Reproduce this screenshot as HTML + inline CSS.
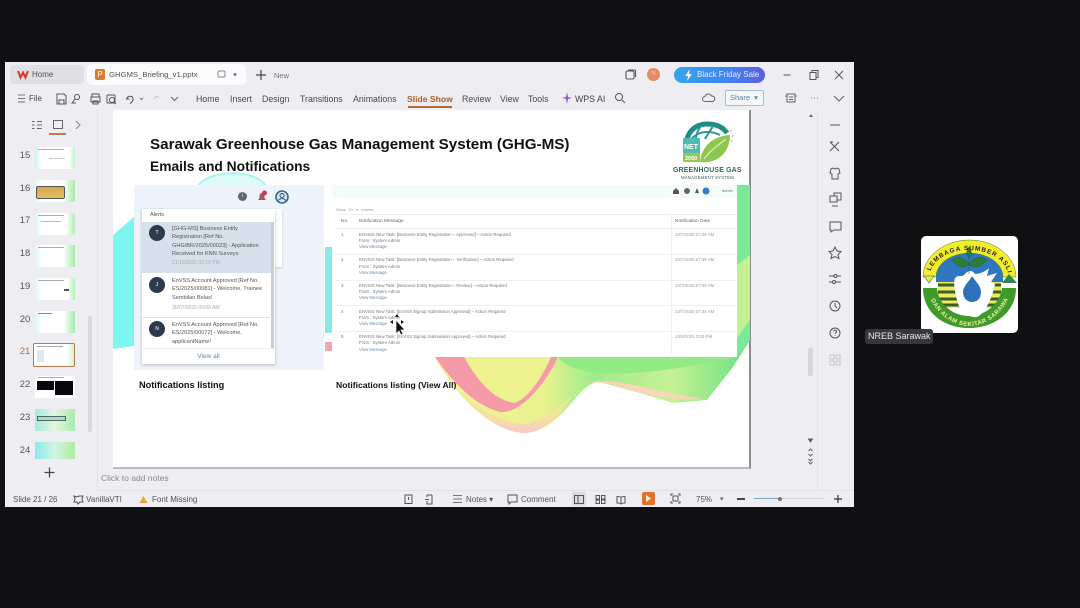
<!DOCTYPE html>
<html><head><meta charset="utf-8"><style>
*{box-sizing:border-box;margin:0;padding:0}
html,body{width:1080px;height:608px;overflow:hidden;background:#101012;font-family:"Liberation Sans",sans-serif;color:#444}
#r{position:absolute;left:0;top:0;width:1080px;height:608px;filter:blur(.35px);overflow:hidden}
.a{position:absolute;white-space:nowrap}
.t{font-size:8.800px;color:#4a4a4a;top:94px}
.s{font-size:8px;color:#555}
.n{font-size:9.500px;color:#555;left:19px;width:12px;text-align:center}
.th{position:absolute;left:35px;width:40px;height:22px;background:#fff;overflow:hidden}
.m{font-size:4.300px;color:#777}
.v{font-size:4.300px;color:#6d8aa5}
.al{font-size:5.600px;line-height:8.400px;color:#555;left:172px;white-space:nowrap}
.dt{font-size:5px;color:#aaa;left:172px}
.av{position:absolute;left:149px;width:16px;height:16px;border-radius:50%;background:#2c3a4d;color:#ccd;font-size:5px;font-weight:bold;text-align:center;line-height:16px}
.d{font-size:4.400px;color:#999;left:675px}
.no{font-size:4.400px;color:#777;left:341px}
svg{position:absolute;overflow:visible}
</style></head><body><div id="r">
<div class="a" style="left:5px;top:62px;width:849px;height:445px;background:#eeeef2"></div>

<div class="a" style="left:10px;top:65px;width:74px;height:19px;background:#dfdfe4;border-radius:4px"></div>
<svg style="left:17px;top:70px" width="12" height="9" fill="none" stroke="#d8382f" stroke-width="2"><path d="M1 1l2.500 6.500L6 2.500 8.500 7.500 11 1"/></svg>
<div class="a s" style="left:32px;top:70px">Home</div>
<div class="a" style="left:87px;top:64px;width:159px;height:21px;background:#fbfbfd;border-radius:5px"></div>
<div class="a" style="left:95px;top:69px;width:10px;height:11px;background:#e07a2b;border-radius:2px;color:#fff;font-size:8px;line-height:11px;text-align:center">P</div>
<div class="a" style="left:109px;top:70px;font-size:7.700px;color:#555">GHGMS_Briefing_v1.pptx</div>
<svg style="left:217px;top:70px" width="24" height="10" fill="none" stroke="#888"><rect x="1" y="1" width="7" height="6" rx="1.500"/><circle cx="18" cy="4.500" r="1.500" fill="#777" stroke="none"/></svg>
<svg style="left:256px;top:70px" width="10" height="10" stroke="#444" stroke-width="1.200"><path d="M5 0v10M0 5h10"/></svg>
<div class="a" style="left:274px;top:71px;font-size:7.500px;color:#777">New</div>

<svg style="left:625px;top:69px" width="11" height="11" fill="none" stroke="#555" stroke-width="1.100"><rect x="1" y="2" width="8" height="8" rx="1.500"/><path d="M3 1h6.500q1 0 1 1v6"/></svg>
<div class="a" style="left:647px;top:68px;width:13px;height:13px;background:#e58b60;border-radius:50%;color:#fbe;font-size:6px;line-height:13px;text-align:center">N</div>
<div class="a" style="left:674px;top:67px;width:91px;height:16px;border-radius:8px;background:linear-gradient(90deg,#34a5ee,#3d87f0 55%,#5b5fe0);color:#e8f0ff;font-size:8px;line-height:16px;padding-left:23px">Black Friday Sale</div>
<svg style="left:684px;top:69px" width="10" height="12" fill="#f2f6ff"><path d="M6 0L1 7h3l-1 5 5-7H5z"/></svg>
<svg style="left:783px;top:69px" width="62" height="12" fill="none" stroke="#555"><path d="M0.500 6h7"/><rect x="27" y="3.500" width="6" height="7"/><path d="M29 3.500v-2h6v7h-2"/><path d="M52 2l8 8M60 2l-8 8"/></svg>

<svg style="left:18px;top:94px" width="8" height="9" stroke="#777"><path d="M0 1h7M0 4.500h7M0 8h7"/></svg>
<div class="a s" style="left:29px;top:94px;color:#444">File</div>
<svg style="left:50px;top:92px" width="135" height="13" fill="none" stroke="#555" stroke-width="1"><path d="M7 2h7l2 2v8H7z"/><path d="M9 12V8h5v4"/><circle cx="27" cy="5" r="2.500"/><path d="M25 7l-3 4h4"/><path d="M42 5V2h7v3M41 5h9v5h-9zM43 9h5v3h-5z"/><rect x="57" y="3" width="8" height="8" rx="1"/><circle cx="62" cy="8" r="2.500"/><path d="M64 10l2 2"/><path d="M78 4.500l-1.500 2.500h3M77 6.500c1-3 5-3 6 0 .5 2-1 4-3 5"/><path d="M90 6l1.500 1.500L93 6" stroke="#777"/><path d="M104 7c1-3 4-3 5-1" stroke="#c4c4c8"/><path d="M121 5l3.500 3.500L128 5" stroke="#666"/></svg>

<div class="a t" style="left:196px">Home</div><div class="a t" style="left:230px">Insert</div><div class="a t" style="left:262px">Design</div><div class="a t" style="left:300px">Transitions</div><div class="a t" style="left:353px">Animations</div>
<div class="a t" style="left:407px;color:#a65f2c;font-weight:bold;font-size:8.600px">Slide Show</div>
<div class="a" style="left:408px;top:106px;width:44px;height:1.500px;background:#b36a33"></div>
<div class="a t" style="left:462px">Review</div><div class="a t" style="left:500px">View</div><div class="a t" style="left:528px">Tools</div>
<svg style="left:562px;top:92px" width="10" height="12" fill="#8a5bd8"><path d="M5 0l1 5 4 1-4 1-1 5-1-5-4-1 4-1z"/></svg>
<div class="a t" style="left:575px;color:#444">WPS AI</div>
<svg style="left:614px;top:92px" width="12" height="12" fill="none" stroke="#555"><circle cx="5" cy="5" r="3.500"/><path d="M8 8l3 3"/></svg>
<svg style="left:702px;top:92px" width="13" height="12" fill="none" stroke="#666"><path d="M3 9.500a2.500 2.500 0 0 1 0-5 3.500 3.500 0 0 1 6.500-.5 2.500 2.500 0 0 1 1 5.500z"/></svg>
<div class="a" style="left:725px;top:90px;width:39px;height:16px;border:1px solid #a6bfcf;border-radius:2px;font-size:7.500px;line-height:14px;padding-left:4px;color:#5a87a8;background:#f4f6f9">Share&nbsp; ▾</div>
<svg style="left:785px;top:92px" width="62" height="12" fill="none" stroke="#666"><path d="M2 2h8v8H2zM0 4h2M10 4h2M4 5h4M4 7.500h4"/><path d="M26 6h.8M29 6h.8M32 6h.8"/><path d="M49 4l5 5 5-5"/></svg>

<div class="a" style="left:97px;top:110px;width:1px;height:380px;background:#e2e2e6"></div>
<div class="a" style="left:817px;top:110px;width:1px;height:380px;background:#e2e2e6"></div>

<svg style="left:31px;top:120px" width="60" height="15" fill="none" stroke="#666"><path d="M1 1.500h2.500M6 1.500h5M1 5h2.500M6 5h5M1 8.500h2.500M6 8.500h5"/><rect x="22.500" y=".5" width="9" height="8"/><path d="M45 1l4 4-4 4" stroke="#888"/></svg>
<div class="a" style="left:49px;top:133px;width:17px;height:1.500px;background:#c77a45"></div>

<div class="a n" style="top:150px">15</div><div class="a n" style="top:183px">16</div><div class="a n" style="top:215px">17</div><div class="a n" style="top:248px">18</div><div class="a n" style="top:281px">19</div><div class="a n" style="top:314px">20</div><div class="a n" style="top:346px;color:#b5723f">21</div><div class="a n" style="top:379px">22</div><div class="a n" style="top:412px">23</div><div class="a n" style="top:445px">24</div>

<div class="th" style="top:147px;background:linear-gradient(90deg,#c9f2f2,#fff 16% 86%,#c4efca)"><div style="position:absolute;left:3px;top:2px;width:26px;height:1px;background:#aaa"></div><div style="position:absolute;left:14px;top:11px;width:16px;height:1px;background:#ccc"></div></div>
<div class="th" style="top:180px;background:linear-gradient(90deg,#e8f6ee,#fff 20% 70%,#a8e8a8)"><div style="position:absolute;left:1px;top:6px;width:29px;height:13px;background:linear-gradient(#d3a94c,#e3bd69);border:1px solid #555;border-radius:2px"></div></div>
<div class="th" style="top:213px;background:linear-gradient(90deg,#d6f5f2,#fff 16% 78%,#b4edb6)"><div style="position:absolute;left:3px;top:2px;width:26px;height:1px;background:#aaa"></div><div style="position:absolute;left:6px;top:8px;width:20px;height:1px;background:#bbb"></div></div>
<div class="th" style="top:245px;background:linear-gradient(90deg,#d9f6f3,#fff 16% 70%,#a5e9aa)"><div style="position:absolute;left:3px;top:2px;width:26px;height:1px;background:#aaa"></div></div>
<div class="th" style="top:278px;background:linear-gradient(90deg,#d9f6f3,#fff 16% 82%,#b4edb6)"><div style="position:absolute;left:3px;top:2px;width:26px;height:1px;background:#aaa"></div><div style="position:absolute;left:29px;top:11px;width:5px;height:2px;background:#456"></div></div>
<div class="th" style="top:311px;background:linear-gradient(90deg,#d9f6f3,#fff 16% 72%,#a5e9aa)"><div style="position:absolute;left:3px;top:2px;width:14px;height:1px;background:#888"></div></div>
<div class="a" style="left:33px;top:343px;width:42px;height:24px;border:1.500px solid #b5794a;border-radius:2px;background:linear-gradient(90deg,#fff 80%,#d5f2d6)"><div style="position:absolute;left:3px;top:2px;width:26px;height:1px;background:#aaa"></div><div style="position:absolute;left:3px;top:6px;width:7px;height:12px;background:#dfe7f2"></div></div>
<div class="th" style="top:376px"><div style="position:absolute;left:2px;top:5px;width:17px;height:9px;background:#08080c"></div><div style="position:absolute;left:20px;top:5px;width:18px;height:14px;background:#08080c"></div><div style="position:absolute;left:3px;top:1px;width:26px;height:1px;background:#aaa"></div></div>
<div class="th" style="top:409px;background:linear-gradient(90deg,#a8e8e2,#e4f7de 50%,#a8eaac)"><div style="position:absolute;left:2px;top:7px;width:29px;height:5px;background:#b5d8c4;border:1px solid #4a6a66"></div></div>
<div class="th" style="top:442px;height:17px;background:linear-gradient(90deg,#8aeaee,#d0f4e2 50%,#aeeb9e)"></div>
<svg style="left:44px;top:467px" width="11" height="11" stroke="#444" stroke-width="1.200"><path d="M5.500 0.500v10M.5 5.500h10"/></svg>
<div class="a" style="left:88px;top:316px;width:4px;height:116px;background:#d8d8dc;border-radius:2px"></div>

<!-- slide -->
<div class="a" style="left:113px;top:110px;width:638px;height:359px;background:#fff;border-right:2px solid #8e8e90;border-bottom:2px solid #bbb;overflow:hidden"></div>
<svg style="left:113px;top:110px" width="637" height="358" viewBox="113 110 637 358">
<defs>
<linearGradient id="g" x1="0" y1="0" x2="1" y2="0"><stop offset="0" stop-color="#f6ef9a"/><stop offset=".35" stop-color="#e8f28e"/><stop offset=".5" stop-color="#9eec8c"/><stop offset=".75" stop-color="#c8f095"/><stop offset="1" stop-color="#66e282"/></linearGradient>
<linearGradient id="e" x1="0" y1="0" x2="0" y2="1"><stop offset="0" stop-color="#f0ee94"/><stop offset=".7" stop-color="#f8e0a0"/><stop offset="1" stop-color="#f9c8c8"/></linearGradient>
</defs>
<path d="M113 235L134 217V346L113 349Z" fill="#7df6f0"/>
<path d="M198 186C208 170 255 168 266 186Z" fill="#dcfbf8" stroke="#a9f5ee" stroke-width="2"/>
<rect x="325" y="247" width="7" height="86" fill="#86ebe6"/><rect x="325" y="342" width="7" height="9" fill="#f2a6ae"/>
<path d="M725 185H750V340L733 367 707 400 673 403 640 393 600 382C578 380 565 430 525 433 500 433 470 410 448 378 442 370 438 364 435 357H725Z" fill="url(#g)"/>
<path d="M448 378C470 410 500 433 525 433 545 433 560 412 572 396 555 410 540 422 525 424 500 424 470 405 448 378Z" fill="url(#e)"/>
<path d="M585 383C620 375 660 395 706 399 670 402 640 393 610 384 600 382 592 382 585 383Z" fill="#f8d6b8"/>
<path d="M464 357C480 385 495 400 515 403 528 398 542 378 551 357H464Z" fill="#eef28e"/>
<path d="M435 357C455 385 475 405 500 412 520 414 545 385 558 357H551C542 378 528 398 515 403 495 400 480 385 464 357Z" fill="#f59aa8"/>
<path d="M558 357C575 380 640 378 737 357Z" fill="#92ea84"/>
<path d="M725 185H750V340L737 357H725Z" fill="#79ea98"/>
<path d="M737 265L750 255V320L737 338Z" fill="#c3f091"/>
</svg>

<div class="a" style="left:150px;top:136px;font-size:15.200px;font-weight:bold;color:#111">Sarawak Greenhouse Gas Management System (GHG-MS)</div>
<div class="a" style="left:150px;top:159px;font-size:13.800px;font-weight:bold;color:#111">Emails and Notifications</div>

<!-- logo -->
<svg style="left:682px;top:122px" width="56" height="42" viewBox="0 0 56 42">
<path d="M5 17C8 6 17 2 25 2c9 0 16 3 20 9" fill="none" stroke="#1f8c86" stroke-width="5"/>
<path d="M8 19C14 10 26 7 38 13M19 4c-4 5-5 9-5 15M31 4c-2 4-6 9-8 13" fill="none" stroke="#2d9a90" stroke-width="2"/>
<path d="M18 40C20 22 33 14 48 13 48 30 36 42 18 40Z" fill="#8cc850"/>
<path d="M22 37C28 29 36 23 44 17" fill="none" stroke="#dcefb4" stroke-width="1.200"/>
<path d="M48 9h1.500M50 14h1.500M49 19h1.500M44 7h1.500" stroke="#c8b860" stroke-width="1.500"/>
<rect x="1" y="16" width="17" height="24" fill="#4dbcb4"/><rect x="1" y="31" width="17" height="9" fill="#9ac84e"/>
<text x="2" y="27" font-size="7" fill="#fff" font-family="Liberation Sans" font-weight="bold">NET</text>
<text x="3" y="38" font-size="5.500" fill="#fff" font-family="Liberation Sans" font-weight="bold">2050</text>
</svg>
<div class="a" style="left:673px;top:167px;font-size:6.900px;font-weight:bold;color:#2d6a64;letter-spacing:.2px">GREENHOUSE GAS</div>
<div class="a" style="left:681px;top:175px;font-size:4.300px;color:#3a5a55;letter-spacing:.2px">MANAGEMENT SYSTEM</div>

<!-- left panel -->
<div class="a" style="left:134px;top:185px;width:190px;height:185px;background:#eef3fb"></div>
<div class="a" style="left:275px;top:209px;width:7px;height:58px;background:#fff;box-shadow:0 1px 2px #ccc"></div>
<div class="a" style="left:238px;top:192px;width:9px;height:9px;border-radius:50%;background:#5f6670;color:#ddd;font-size:6px;line-height:9px;text-align:center">i</div>
<svg style="left:257px;top:190px" width="12" height="13"><path d="M5 3C2.500 3 2.500 6 2.500 8L1 10h8L7.500 8C7.500 6 7.500 3 5 3Z" fill="#a85466"/><circle cx="7.500" cy="3" r="2.500" fill="#d03a50"/></svg>
<svg style="left:275px;top:190px" width="14" height="14" fill="none"><circle cx="7" cy="7" r="6" stroke="#2b6a94" stroke-width="1.600" fill="#dde7f2"/><circle cx="7" cy="5.500" r="2" stroke="#2b5a7c"/><path d="M3.500 10.500c1-2.500 6-2.500 7 0" stroke="#2b5a7c"/></svg>
<div class="a" style="left:142px;top:209px;width:133px;height:155px;background:#fff;box-shadow:0 1px 3px rgba(0,0,0,.25)"></div>
<div class="a" style="left:150px;top:212px;font-size:5.500px;color:#555">Alerts</div>
<div class="a" style="left:142px;top:222px;width:130px;height:51px;background:#d6e1ec"></div>
<div class="a" style="left:271px;top:222px;width:3px;height:126px;background:#c9ced6"></div>
<div class="av" style="top:225px">T</div>
<div class="a al" style="top:225px">[GHG-MS] Business Entity<br>Registration [Ref No.<br>GHG/BR/2025/00023] - Application<br>Received for KNN Surveys</div>
<div class="a dt" style="top:260px">21/10/2025 02:19 PM</div>
<div class="a" style="left:142px;top:317px;width:130px;height:1px;background:#e2e2e2"></div>
<div class="av" style="top:277px">J</div>
<div class="a al" style="top:277px">EnVSS Account Approved [Ref No.<br>ES/2025/00081] - Welcome, Trainee<br>Sembilan Belas!</div>
<div class="a dt" style="top:305px">30/07/2025 09:09 AM</div>
<div class="av" style="top:321px">N</div>
<div class="a al" style="top:321px">EnVSS Account Approved [Ref No.<br>ES/2025/00072] - Welcome,<br>applicantName!</div>
<div class="a" style="left:142px;top:348px;width:133px;height:16px;background:#fff;border-top:1px solid #eee;font-size:6.500px;text-align:center;line-height:15px;color:#5b83a6">View all</div>

<!-- right panel -->
<div class="a" style="left:332px;top:185px;width:405px;height:172px;background:#fff"></div>
<div class="a" style="left:332px;top:185px;width:405px;height:13px;background:#f4fbf9"></div>
<svg style="left:672px;top:187px" width="37" height="8"><path d="M1 4l3-3 3 3v3H1z" fill="#555"/><circle cx="15" cy="4" r="3" fill="#666"/><path d="M25 1l2 5h-4z" fill="#555"/><circle cx="34" cy="4" r="3.500" fill="#2c7fc0"/></svg>
<div class="a" style="left:722px;top:188px;font-size:4px;color:#777">admin</div>
<div class="a" style="left:336px;top:207px;font-size:4px;color:#999">Show&nbsp; 10 &nbsp; ▾ &nbsp; entries</div>
<div class="a" style="left:336px;top:214px;width:400px;height:1px;background:#eee"></div>
<div class="a" style="left:336px;top:228px;width:400px;height:1px;background:#eee"></div>
<div class="a" style="left:671px;top:214px;width:1px;height:140px;background:#eee"></div>
<div class="a" style="left:341px;top:219px;font-size:4.800px;color:#666">No.</div>
<div class="a" style="left:359px;top:219px;font-size:4.800px;color:#666">Notification Message</div>
<div class="a" style="left:675px;top:219px;font-size:4.800px;color:#666">Notification Date</div>

<div class="a no" style="top:232px">1</div><div class="a m" style="left:359px;top:232px">ENVISS New Task: [Business Entity Registration – Approved] – Action Required</div><div class="a m" style="left:359px;top:238px">From : System Admin</div><div class="a v" style="left:359px;top:244px">View Message</div><div class="a d" style="top:232px">10/7/2025 07:49 AM</div>
<div class="a" style="left:336px;top:254px;width:400px;height:1px;background:#f0f0f0"></div>
<div class="a no" style="top:257px">2</div><div class="a m" style="left:359px;top:257px">ENVISS New Task: [Business Entity Registration – Verification] – Action Required</div><div class="a m" style="left:359px;top:264px">From : System Admin</div><div class="a v" style="left:359px;top:270px">View Message</div><div class="a d" style="top:257px">10/7/2025 07:49 AM</div>
<div class="a" style="left:336px;top:280px;width:400px;height:1px;background:#f0f0f0"></div>
<div class="a no" style="top:283px">3</div><div class="a m" style="left:359px;top:283px">ENVISS New Task: [Business Entity Registration – Review] – Action Required</div><div class="a m" style="left:359px;top:289px">From : System Admin</div><div class="a v" style="left:359px;top:295px">View Message</div><div class="a d" style="top:283px">10/7/2025 07:49 AM</div>
<div class="a" style="left:336px;top:305px;width:400px;height:1px;background:#f0f0f0"></div>
<div class="a no" style="top:309px">4</div><div class="a m" style="left:359px;top:309px">ENVISS New Task: [EnVSS Signup Submission Approved] – Action Required</div><div class="a m" style="left:359px;top:315px">From : System Admin</div><div class="a v" style="left:359px;top:321px">View Message</div><div class="a d" style="top:309px">10/7/2025 07:34 AM</div>
<div class="a" style="left:336px;top:331px;width:400px;height:1px;background:#f0f0f0"></div>
<div class="a no" style="top:334px">5</div><div class="a m" style="left:359px;top:334px">ENVISS New Task: [EnVSS Signup Submission Approved] – Action Required</div><div class="a m" style="left:359px;top:340px">From : System Admin</div><div class="a v" style="left:359px;top:347px">View Message</div><div class="a d" style="top:334px">10/5/2025 3:00 PM</div>

<div class="a" style="left:139px;top:380px;font-size:9.200px;font-weight:bold;color:#111">Notifications listing</div>
<div class="a" style="left:336px;top:380px;font-size:8.600px;font-weight:bold;color:#111">Notifications listing (View All)</div>

<!-- cursor -->
<svg style="left:390px;top:314px" width="18" height="22"><path d="M7 0L5 3h4zM0 8l3-2v4zM14 8l-3-2v4z" fill="#111"/><path d="M6 6v14l3-3 2 4 2-1-2-4h4z" fill="#111" stroke="#fff" stroke-width=".7"/></svg>

<!-- notes / side scroll -->
<div class="a" style="left:101px;top:473px;font-size:8.500px;color:#8a8a8a">Click to add notes</div>
<div class="a" style="left:97px;top:490px;width:757px;height:1px;background:#e3e3e7"></div>
<div class="a" style="left:808px;top:348px;width:5px;height:28px;background:#d6d6da;border-radius:2px"></div>
<svg style="left:808px;top:113px" width="6" height="5" fill="#666"><path d="M3 1l2 3H1z"/></svg>
<svg style="left:807px;top:437px" width="7" height="28" fill="none" stroke="#666"><path d="M1.500 2h4L3.500 5z" fill="#555"/><path d="M1.500 14l2-2 2 2M1.500 17l2 2 2-2M1.500 25l2 2 2-2M1.500 22l2 2 2-2"/></svg>

<!-- right bar icons -->
<svg style="left:828px;top:119px" width="14" height="252" fill="none" stroke="#555" stroke-width="1"><path d="M2 6h10"/>
<g transform="translate(0,1)"><path d="M2 22l9 9M11 22l-9 9M2 22l3 0M11 31l-2-2"/></g>
<g transform="translate(0,2)"><path d="M3 48l2-1 2 1 2-1 2 1 1 4-2 1v5H4v-5l-2-1z"/></g>
<g transform="translate(0,3)"><path d="M2 74h7v6H2zM6 74v-3h7v7h-4M4 84h6"/></g>
<g transform="translate(0,-7)"><path d="M2 110h11v8H6l-3 2 0-2H2z"/></g>
<g transform="translate(0,-6)"><path d="M7 134l2 4 4 .5-3 3 1 4-4-2-4 2 1-4-3-3 4-.5z"/></g>
<g transform="translate(0,-6)"><path d="M1 163h5M9 163h4M1 169h3M8 169h5"/><circle cx="7.500" cy="163" r="1.500"/><circle cx="6" cy="169" r="1.500"/></g>
<circle cx="7" cy="187" r="5"/><path d="M7 184v3l2 2"/>
<circle cx="7" cy="214" r="5"/><path d="M5.500 212.500a1.500 1.500 0 1 1 2 1.500l-.5.8M7 216.500v.5"/>
<g stroke="#c6c6ca"><rect x="2" y="236" width="4" height="4"/><rect x="8" y="236" width="4" height="4"/><rect x="2" y="242" width="4" height="4"/><rect x="8" y="242" width="4" height="4"/></g></svg>

<!-- status bar -->
<div class="a s" style="left:13px;top:495px">Slide 21 / 26</div>
<svg style="left:73px;top:494px" width="11" height="11" fill="none" stroke="#555"><path d="M1 2l3 1 2-1 4 0-1 3 1 3-3 0-2 2-1-2-3 0 1-3z"/></svg>
<div class="a s" style="left:86px;top:495px">VanillaVTI</div>
<svg style="left:139px;top:495px" width="9" height="9"><path d="M4.500 1L8.500 8h-8z" fill="#e4a93a"/></svg>
<div class="a s" style="left:152px;top:495px">Font Missing</div>
<svg style="left:404px;top:494px" width="32" height="11" fill="none" stroke="#555"><rect x="1" y="1" width="7" height="8.500"/><path d="M4.500 3v3"/><path d="M28 1h-5v2M23 7v3h5V1M21 5.500h4"/></svg>
<svg style="left:453px;top:494px" width="10" height="10" stroke="#777"><path d="M0 1.500h9M0 5h9M0 8.500h9"/></svg>
<div class="a s" style="left:466px;top:495px">Notes ▾</div>
<svg style="left:507px;top:494px" width="11" height="11" fill="none" stroke="#555"><path d="M1 1h9v7H4L2 10V8H1z"/></svg>
<div class="a s" style="left:521px;top:495px">Comment</div>
<div class="a" style="left:572px;top:492px;width:14px;height:14px;background:#dcdce0;border-radius:2px"></div>
<svg style="left:574px;top:495px" width="54" height="9" fill="none" stroke="#555"><rect x=".5" y=".5" width="9" height="8"/><path d="M4 .5v8"/><rect x="22" y=".5" width="3.500" height="3.500"/><rect x="27.500" y=".5" width="3.500" height="3.500"/><rect x="22" y="5" width="3.500" height="3.500"/><rect x="27.500" y="5" width="3.500" height="3.500"/><path d="M43 1.500c2 0 3.500 0 4 1 .5-1 2-1 4-1v6.500c-2 0-3.500 0-4 1-.5-1-2-1-4-1zM47 2.500v6"/></svg>
<div class="a" style="left:642px;top:492px;width:13px;height:13px;background:#e0702a;border-radius:2px"></div>
<svg style="left:645px;top:495px" width="7" height="7" fill="#fff5d0"><path d="M1 0l5 3.500-5 3.500z"/></svg>
<svg style="left:670px;top:493px" width="11" height="11" fill="none" stroke="#555"><path d="M1 3V1h2M8 1h2v2M10 8v2H8M3 10H1V8"/><rect x="3" y="3" width="5" height="5"/></svg>
<div class="a s" style="left:696px;top:495px">75%</div>
<div class="a" style="left:720px;top:495px;font-size:7px;color:#666">▾</div>
<div class="a" style="left:737px;top:498px;width:8px;height:1.500px;background:#444"></div>
<div class="a" style="left:754px;top:498px;width:71px;height:1px;background:#d4d4d8"></div>
<div class="a" style="left:754px;top:498px;width:25px;height:1.200px;background:#7ba6c6"></div>
<div class="a" style="left:778px;top:496.500px;width:4px;height:4px;border-radius:50%;background:#777"></div>
<svg style="left:834px;top:495px" width="8" height="8" stroke="#333" stroke-width="1.200"><path d="M4 0v8M0 4h8"/></svg>

<!-- participant tile -->
<div class="a" style="left:921px;top:236px;width:97px;height:97px;background:#fff;border-radius:5px;overflow:hidden"></div>
<svg style="left:921px;top:236px" width="97" height="97" viewBox="0 0 97 97">
<defs><path id="tp1" d="M9 40A39 26 0 0 1 87 40"/><path id="tp2" d="M9 62C18 82 36 90 48 90 62 90 78 82 88 62"/></defs>
<path d="M15 41A33.500 24 0 0 1 82 41V46H15Z" fill="#2f77c0"/>
<path d="M2 41A46.500 37 0 0 1 95 41H82A33.500 24 0 0 0 15 41Z" fill="#f2ec2a" stroke="#4a7a2a" stroke-width=".5"/>
<path d="M17 46H80V72H17Z" fill="#eceb62"/>
<path d="M17 49h63M17 56h63M17 63h63M17 69h63" stroke="#3a5e2c" stroke-width="3"/>
<path d="M2 52H16C17 68 32 80 48 80 64 80 79 68 81 52H95C95 76 74 92 48 92 22 92 2 76 2 52Z" fill="#3f9a2c"/>
<path d="M3 40h10l-5 7z" fill="#e9e65a" stroke="#3a6a2a" stroke-width=".6"/>
<path d="M81 47l7-9 8 9z" fill="#2f8a4a"/>
<path d="M34 42C38 38 41 42 44 38 48 33 52 35 54 38 58 38 64 36 68 32L66 40 76 37 70 46 74 48C72 60 64 78 56 81 46 82 38 74 36 64 34 56 32 48 34 42Z" fill="#fff"/>
<path d="M51 40C55 46 60 50 60 56 60 63 56 66 51 66 46 66 42 62 42 56 42 50 48 46 51 40Z" fill="#2f72bb"/>
<path d="M48 38V18M48 28C42 20 36 20 31 24 36 31 43 33 48 28ZM48 28C54 20 60 20 66 24 60 31 53 33 48 28ZM48 22C44 18 46 14 48 11 50 14 52 18 48 22Z" fill="#2f7d34" stroke="#1f5e28" stroke-width=".5"/>
<text font-size="6.300" font-family="Liberation Sans" font-weight="bold" fill="#222" letter-spacing="1"><textPath href="#tp1" startOffset="5">LEMBAGA SUMBER ASLI</textPath></text>
<text font-size="6" font-family="Liberation Sans" font-weight="bold" fill="#f1f1a0" letter-spacing=".5"><textPath href="#tp2" startOffset="2">DAN ALAM SEKITAR SARAWAK</textPath></text>
</svg>
<div class="a" style="left:865px;top:329px;width:68px;height:15px;background:#37373b;border-radius:3px;color:#e8e8e8;font-size:9px;line-height:15px;padding-left:3px">NREB Sarawak</div>
</div></body></html>
